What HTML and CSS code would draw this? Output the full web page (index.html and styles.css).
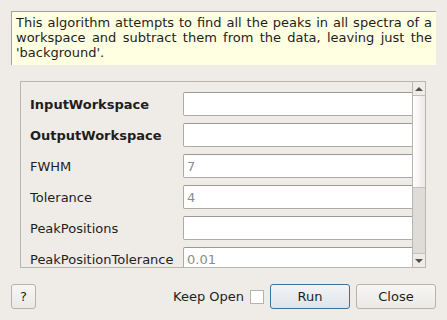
FILE: index.html
```html
<!DOCTYPE html>
<html lang="en">
  <head>
    <meta charset="UTF-8" />
    <title>RemovePeaks</title>
    <link rel="stylesheet" href="styles.css">
  </head>
  <body>
    <div class="dialog">
      <p class="description">
        This algorithm attempts to find all the peaks in all spectra of a workspace and subtract
        them from the data, leaving just the 'background'.
      </p>

      <div class="scroll-area">
        <div class="fields">
          <div class="row">
            <label class="required">InputWorkspace</label>
            <input type="text" />
          </div>
          <div class="row">
            <label class="required">OutputWorkspace</label>
            <input type="text" />
          </div>
          <div class="row">
            <label>FWHM</label>
            <input type="text" placeholder="7" />
          </div>
          <div class="row">
            <label>Tolerance</label>
            <input type="text" placeholder="4" />
          </div>
          <div class="row">
            <label>PeakPositions</label>
            <input type="text" />
          </div>
          <div class="row">
            <label>PeakPositionTolerance</label>
            <input type="text" placeholder="0.01" />
          </div>
        </div>
        <div class="scrollbar">
          <div class="arrow up"></div>
          <div class="handle"></div>
          <div class="groove"></div>
          <div class="arrow down"></div>
        </div>
      </div>

      <div class="buttons">
        <button class="btn help">?</button>
        <span class="spacer"></span>
        <label class="keep-open">Keep Open <span class="check"></span></label>
        <button class="btn run">Run</button>
        <button class="btn">Close</button>
      </div>
    </div>
  </body>
</html>
```

FILE: styles.css
```css
html,
body {
  width: 100%;
  height: 100%;
  margin: 0;
  padding: 0;
  overflow: hidden;
}

body {
  font-family: 'DejaVu Sans', sans-serif;
  font-size: 13px;
  color: #1e1e1e;
  background: #efebe7;
}

.dialog {
  padding: 11px;
}

.description {
  margin: 0;
  height: 54px;
  padding: 3px 4px 0 4px;
  box-sizing: border-box;
  background: #ffffe1;
  border-top: 1px solid #a5a29d;
  border-left: 1px solid #a5a29d;
  line-height: 15px;
  text-align: justify;
}

.scroll-area {
  display: flex;
  margin: 16px 10px 0 9px;
  height: 187px;
  box-sizing: border-box;
  border: 1px solid #b9b5b0;
  border-right: none;
}

.fields {
  flex: 1;
  overflow: hidden;
  padding: 10px 0 0 9px;
}

.row {
  display: flex;
  align-items: center;
  height: 24px;
  margin-bottom: 7px;
}

.row label {
  width: 153px;
  flex: none;
  white-space: nowrap;
}

.row label.required {
  font-weight: bold;
}

.row input {
  flex: none;
  width: 232px;
  height: 24px;
  box-sizing: border-box;
  margin: 0;
  padding: 0 3px;
  border: 1px solid #aeaba6;
  border-top-color: #9c9994;
  border-radius: 2px;
  background: #fff;
  font-family: 'DejaVu Sans', sans-serif;
  font-size: 13px;
}

.row input::placeholder {
  color: #8c8c8c;
}

.scrollbar {
  width: 14px;
  display: flex;
  flex-direction: column;
  box-sizing: border-box;
  border-left: 1px solid #b9b5b0;
  border-right: 1px solid #b9b5b0;
  background: #dedcd8;
}

.arrow {
  height: 13px;
  background: #efebe7;
  position: relative;
}

.arrow.up {
  border-bottom: 1px solid #c4c1bc;
}

.arrow.down {
  border-top: 1px solid #c4c1bc;
}

.arrow::after {
  content: '';
  position: absolute;
  left: 2px;
  top: 5px;
  border-left: 4px solid transparent;
  border-right: 4px solid transparent;
}

.arrow.up::after {
  border-bottom: 4px solid #505050;
}

.arrow.down::after {
  border-top: 4px solid #505050;
}

.handle {
  height: 91px;
  background: linear-gradient(to right, #ffffff, #ebe9e6);
  border-bottom: 1px solid #c4c1bc;
}

.groove {
  flex: 1;
}

.buttons {
  display: flex;
  align-items: center;
  margin-top: 16px;
  gap: 6px;
}

.spacer {
  flex: 1;
}

.btn {
  height: 25px;
  width: 80px;
  margin: 0;
  padding: 0;
  font-family: 'DejaVu Sans', sans-serif;
  font-size: 13px;
  color: #1e1e1e;
  border: 1px solid #b6b2ac;
  border-radius: 3px;
  background: linear-gradient(#f7f6f5, #ebe9e6);
}

.btn.help {
  width: 25px;
}

.btn.run {
  border-color: #3e709c;
  background: linear-gradient(#f2f4f6, #dfe4e9);
}

.keep-open {
  display: flex;
  align-items: center;
  gap: 6px;
}

.check {
  display: inline-block;
  width: 14px;
  height: 14px;
  box-sizing: border-box;
  border: 1px solid #b6b2ac;
  background: #fff;
}
```
